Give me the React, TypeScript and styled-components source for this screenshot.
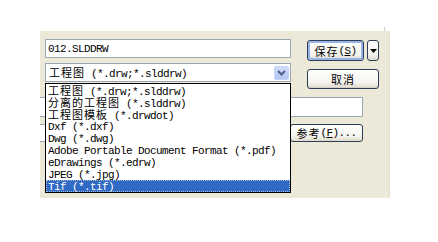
import React from 'react';
import styled, { createGlobalStyle } from 'styled-components';

const GlobalStyle = createGlobalStyle`
  html, body {
    margin: 0;
    padding: 0;
    background: #ffffff;
  }
  body {
    font-family: "Liberation Mono", "Noto Sans CJK SC", monospace;
  }
`;

const FILE_TYPES = [
  '工程图 (*.drw;*.slddrw)',
  '分离的工程图 (*.slddrw)',
  '工程图模板 (*.drwdot)',
  'Dxf (*.dxf)',
  'Dwg (*.dwg)',
  'Adobe Portable Document Format (*.pdf)',
  'eDrawings (*.edrw)',
  'JPEG (*.jpg)',
  'Tif (*.tif)'
];

const CJK = /([\u3000-\u9fff\uff00-\uffef]+)/;

// SimSun style: half-width latin at 6px, full-width CJK at 12px
const MixedText: React.FC<{ text: string }> = ({ text }) => (
  <Line>
    {text.split(CJK).map((part, i) =>
      CJK.test(part) ? <Cjk key={i}>{part}</Cjk> : <Latin key={i}>{part}</Latin>
    )}
  </Line>
);

const App: React.FC = () => (
  <>
    <GlobalStyle />
    <Panel>
      <Row $height={24}>
        <Field $width={246} $offset={5}>
          <MixedText text="012.SLDDRW" />
        </Field>
        <Actions $top={1}>
          <PushButton $width={57} $height={21} $primary>
            <Cjk>保存</Cjk>
            <Latin>(</Latin>
            <Mnemonic>S</Mnemonic>
            <Latin>)</Latin>
          </PushButton>
          <SplitButton>
            <svg width="7" height="4" viewBox="0 0 7 4">
              <path d="M0 0h7L3.5 4z" fill="#000" />
            </svg>
          </SplitButton>
        </Actions>
      </Row>
      <Row $height={34}>
        <Combo>
          <MixedText text={FILE_TYPES[0]} />
          <ComboArrow>
            <svg width="9" height="6" viewBox="0 0 9 6">
              <path
                d="M1 1l3.5 3.5L8 1"
                stroke="#4d6185"
                strokeWidth="2"
                fill="none"
              />
            </svg>
          </ComboArrow>
        </Combo>
        <Actions $top={6}>
          <PushButton $width={72} $height={20}>
            <Cjk>取消</Cjk>
          </PushButton>
        </Actions>
      </Row>
      <Row $height={27}>
        <Field $width={327} $offset={-4} $height={20} />
      </Row>
      <Row $height={20}>
        <Field $width={248} $offset={-4} $height={18} />
        <BrowseButton>
          <Cjk>参考</Cjk>
          <Latin>(</Latin>
          <Mnemonic>F</Mnemonic>
          <Latin>)...</Latin>
        </BrowseButton>
      </Row>

      <DropList>
        {FILE_TYPES.map((type, i) => (
          <Option key={type} $selected={i === FILE_TYPES.length - 1}>
            <MixedText text={type} />
          </Option>
        ))}
      </DropList>
    </Panel>
  </>
);

const Panel = styled.div`
  position: relative;
  box-sizing: border-box;
  margin: 31px 0 0 40px;
  width: 350px;
  height: 167px;
  padding-top: 8px;
  background: #ece9d8;
  border-right: 1px solid #e2dfcf;
  display: flex;
  flex-direction: column;

  &::before {
    content: '';
    position: absolute;
    right: 4px;
    top: -4px;
    width: 1px;
    height: 4px;
    background: #cfcfcf;
  }
`;

const Row = styled.div<{ $height: number }>`
  display: flex;
  align-items: flex-start;
  height: ${p => p.$height}px;
  flex: none;
  overflow: hidden;
`;

const Line = styled.span`
  flex: 1;
  display: block;
  line-height: 12px;
  white-space: nowrap;
`;

const Latin = styled.span`
  font-family: "Liberation Mono", monospace;
  font-size: 11px;
  line-height: 12px;
  letter-spacing: -0.6px;
`;

const Cjk = styled.span`
  font-family: "Noto Sans CJK SC", sans-serif;
  font-size: 11px;
  line-height: 12px;
  letter-spacing: 1px;
`;

const Mnemonic = styled(Latin)`
  text-decoration: underline;
`;

const Field = styled.div<{ $width: number; $offset: number; $height?: number }>`
  box-sizing: border-box;
  flex: none;
  display: flex;
  align-items: center;
  width: ${p => p.$width}px;
  height: ${p => p.$height ?? 19}px;
  margin-left: ${p => p.$offset}px;
  padding-left: 2px;
  border: 1px solid #9aa6b4;
  background: #ffffff;
  color: #000;
`;

const Combo = styled.div`
  box-sizing: border-box;
  flex: none;
  display: flex;
  align-items: center;
  width: 246px;
  height: 19px;
  margin-left: 5px;
  padding: 0 1px 0 3px;
  border: 1px solid #9aa6b4;
  background: #ffffff;
  color: #000;
`;

const ComboArrow = styled.div`
  box-sizing: border-box;
  flex: none;
  width: 15px;
  height: 14px;
  margin-top: 1px;
  display: flex;
  align-items: center;
  justify-content: center;
  border-radius: 2px;
  background: linear-gradient(#d2def9, #b4c6f2);
  border: 1px solid #c3d3fa;
`;

const Actions = styled.div<{ $top: number }>`
  display: flex;
  margin-left: 16px;
  margin-top: ${p => p.$top}px;
`;

const ButtonBase = styled.div`
  box-sizing: border-box;
  display: flex;
  align-items: center;
  justify-content: center;
  border: 1px solid #2f3e56;
  border-radius: 3px;
  background: linear-gradient(#ffffff 0%, #f4f3ee 70%, #dcd9cc 100%);
  color: #000;
  line-height: 12px;
  white-space: nowrap;
`;

const PushButton = styled(ButtonBase)<{ $width: number; $height: number; $primary?: boolean }>`
  width: ${p => p.$width}px;
  height: ${p => p.$height}px;
  box-shadow: ${p => (p.$primary ? 'inset 0 0 0 2px #98b4e8' : 'inset 0 -1px 0 #d6d0c5')};
`;

const SplitButton = styled(ButtonBase)`
  width: 12px;
  height: 21px;
  margin-left: 3px;
`;

const BrowseButton = styled(ButtonBase)`
  flex: none;
  width: 73px;
  height: 18px;
  margin-left: 6px;
`;

const DropList = styled.div`
  position: absolute;
  left: 5px;
  top: 52px;
  box-sizing: border-box;
  width: 246px;
  height: 110px;
  border: 1px solid #000;
  background: #ffffff;
  overflow: hidden;
`;

const Option = styled.div<{ $selected?: boolean }>`
  box-sizing: border-box;
  display: flex;
  height: 12px;
  padding-left: 2px;
  color: ${p => (p.$selected ? '#ffffff' : '#000000')};
  background: ${p => (p.$selected ? '#316ac5' : 'transparent')};
  outline: ${p => (p.$selected ? '1px dotted #a8b8d8' : 'none')};
  outline-offset: -1px;
`;

export default App;
